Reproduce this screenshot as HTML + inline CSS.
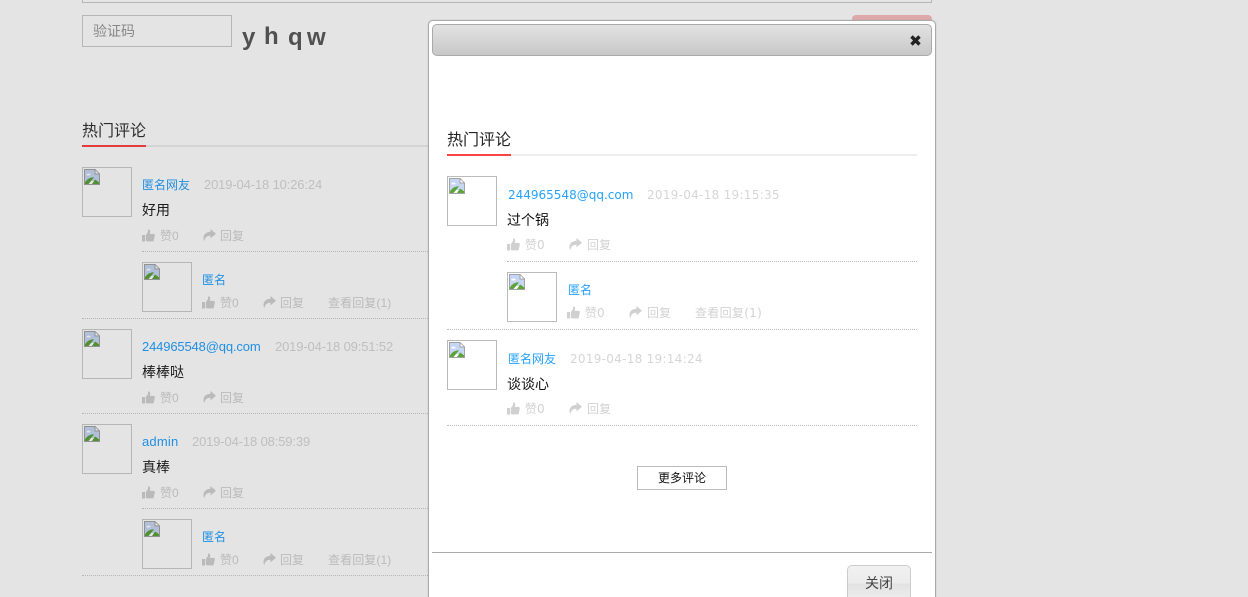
<!DOCTYPE html>
<html><head><meta charset="utf-8"><style>
html,body{margin:0;padding:0;background:#fff}
html{width:1248px;height:597px;overflow:hidden}
body{width:1248px;height:597px;overflow:hidden;position:relative;font-family:"Liberation Sans","Noto Sans CJK SC",sans-serif}
.a{position:absolute;white-space:nowrap}
.t{position:absolute;white-space:nowrap;line-height:20px;height:20px}
.av{position:absolute;width:48px;height:48px;border:1px solid #ccc;background:transparent}
.av svg{position:absolute;left:1px;top:1px}
.n{color:#25a2ff;font-size:12px}
.em{color:#25a2ff;font-size:13px}
.d{color:#d6d6d6;font-size:13px}
.c{color:#222;font-size:14px}
.g{color:#d2d2d2;font-size:12px}
.dl{position:absolute;height:0;border-top:1px dotted #ccc}
#ov ~ .av{border-color:#bbb}
#ov ~ .dl{border-color:#bbb}
.ic{position:absolute;fill:#d0d0d0}
.m{font-family:"DejaVu Sans","Noto Sans CJK SC",sans-serif}
#ov{position:absolute;left:0;top:0;width:1248px;height:597px;background:rgba(0,0,0,.105)}
#modal{position:absolute;left:428px;top:20px;width:506px;height:600px;border:1px solid #aaa;border-radius:5px;background:#fff;box-shadow:0 0 0 1px rgba(170,170,170,.15)}
</style></head><body>
<svg width="0" height="0" style="position:absolute"><defs>
<symbol id="th" viewBox="0 0 13 13"><path d="M0 6h3v6.500H0zM3.800 6.200 6 3V.6c1.300-.3 2.200.5 2.200 1.800 0 .9-.3 1.700-.6 2.500h3.900c1 0 1.500.8 1.300 1.600l-1 5c-.2.600-.6.900-1.200.9H5.500c-.7 0-1.200-.3-1.700-.6z"/></symbol>
<symbol id="sh" viewBox="0 0 13 13"><path d="M7.500 0 13 4.700 7.500 9.400V6.700C4.300 6.700 2 7.800 1.300 12.300-.8 7.800 1.200 3 7.500 2.700z"/></symbol>
<symbol id="br" viewBox="0 0 16 16"><path d="M.5.500h10.500l4.500 4.500v10.500H.5z" fill="#fff" stroke="#a3a3a3"/><path d="M1 1h9.500v4.500H15V12H1z" fill="#c6d6f5"/><path d="M2 6c2-2 3-2 5 0-2 .8-4 .6-5 0z" fill="#fff"/><path d="M1 15v-2c3-4 7-5 9-4.500L4.500 15z" fill="#5ba33a"/><path d="M11 10.500 15 13v2H8z" fill="#5ba33a"/><path d="M11 1v4h4" fill="#fff" stroke="#a3a3a3"/></symbol>
</defs></svg>

<!-- page behind -->
<div class="a" style="left:82px;top:-10px;width:848px;height:11px;border:1px solid #ccc"></div>
<div class="a" style="left:852px;top:15px;width:80px;height:30px;background:#f9bcbc;border-radius:4px"></div>
<div class="a" style="left:82px;top:15px;width:148px;height:30px;border:1px solid #ccc;line-height:30px;font-size:14px;color:#999;text-indent:10px">验证码</div>
<div class="a" style="left:242px;top:23px;font:bold 24px/30px 'Liberation Sans',sans-serif;color:#5a5a5a">y</div>
<div class="a" style="left:264px;top:22px;font:bold 24px/30px 'Liberation Sans',sans-serif;color:#5a5a5a">h</div>
<div class="a" style="left:288px;top:23px;font:bold 24px/30px 'Liberation Sans',sans-serif;color:#5a5a5a">q</div>
<div class="a" style="left:307px;top:23px;font:bold 24px/30px 'Liberation Sans',sans-serif;color:#5a5a5a">w</div>

<div class="t" style="left:82px;top:122px;font-size:16px;color:#333">热门评论</div>
<div class="a" style="left:82px;top:145px;width:850px;height:2px;background:#eee"></div>
<div class="a" style="left:82px;top:145px;width:64px;height:2px;background:#f44"></div>

<div class="av" style="left:82px;top:167px"><svg width="16" height="16"><use href="#br"/></svg></div>
<div class="t n" style="left:142px;top:175px">匿名网友</div>
<div class="t d" style="left:204px;top:175px;letter-spacing:-.14px">2019-04-18 10:26:24</div>
<div class="t c" style="left:142px;top:200px">好用</div>
<svg class="ic" style="left:142px;top:229px" width="13" height="13"><use href="#th"/></svg><div class="t g" style="left:160px;top:226px">赞0</div>
<svg class="ic" style="left:203px;top:229px" width="13" height="13"><use href="#sh"/></svg><div class="t g" style="left:220px;top:226px">回复</div>
<div class="dl" style="left:142px;top:251px;width:790px"></div>

<div class="av" style="left:142px;top:262px"><svg width="16" height="16"><use href="#br"/></svg></div>
<div class="t n" style="left:202px;top:270px">匿名</div>
<svg class="ic" style="left:202px;top:296px" width="13" height="13"><use href="#th"/></svg><div class="t g" style="left:220px;top:293px">赞0</div>
<svg class="ic" style="left:263px;top:296px" width="13" height="13"><use href="#sh"/></svg><div class="t g" style="left:280px;top:293px">回复</div>
<div class="t g" style="left:328px;top:293px;letter-spacing:.1px">查看回复(1)</div>
<div class="dl" style="left:82px;top:318px;width:850px"></div>

<div class="av" style="left:82px;top:329px"><svg width="16" height="16"><use href="#br"/></svg></div>
<div class="t em" style="left:142px;top:337px;letter-spacing:-.15px">244965548@qq.com</div>
<div class="t d" style="left:275px;top:337px;letter-spacing:-.14px">2019-04-18 09:51:52</div>
<div class="t c" style="left:142px;top:362px">棒棒哒</div>
<svg class="ic" style="left:142px;top:391px" width="13" height="13"><use href="#th"/></svg><div class="t g" style="left:160px;top:388px">赞0</div>
<svg class="ic" style="left:203px;top:391px" width="13" height="13"><use href="#sh"/></svg><div class="t g" style="left:220px;top:388px">回复</div>
<div class="dl" style="left:82px;top:413px;width:850px"></div>

<div class="av" style="left:82px;top:424px"><svg width="16" height="16"><use href="#br"/></svg></div>
<div class="t em" style="left:142px;top:432px;letter-spacing:.2px">admin</div>
<div class="t d" style="left:192px;top:432px;letter-spacing:-.14px">2019-04-18 08:59:39</div>
<div class="t c" style="left:142px;top:457px">真棒</div>
<svg class="ic" style="left:142px;top:486px" width="13" height="13"><use href="#th"/></svg><div class="t g" style="left:160px;top:483px">赞0</div>
<svg class="ic" style="left:203px;top:486px" width="13" height="13"><use href="#sh"/></svg><div class="t g" style="left:220px;top:483px">回复</div>
<div class="dl" style="left:142px;top:508px;width:790px"></div>

<div class="av" style="left:142px;top:519px"><svg width="16" height="16"><use href="#br"/></svg></div>
<div class="t n" style="left:202px;top:527px">匿名</div>
<svg class="ic" style="left:202px;top:553px" width="13" height="13"><use href="#th"/></svg><div class="t g" style="left:220px;top:550px">赞0</div>
<svg class="ic" style="left:263px;top:553px" width="13" height="13"><use href="#sh"/></svg><div class="t g" style="left:280px;top:550px">回复</div>
<div class="t g" style="left:328px;top:550px;letter-spacing:.1px">查看回复(1)</div>
<div class="dl" style="left:82px;top:575px;width:850px"></div>

<div id="ov"></div>

<!-- modal -->
<div id="modal"></div>
<div class="a" style="left:432px;top:24px;width:498px;height:30px;border:1px solid #aaa;border-radius:5px;background:linear-gradient(#e2e2e2,#c8c8c8)"></div>
<svg class="a" style="left:910px;top:35px" width="11" height="11" viewBox="0 0 11 11"><path d="M1.500 1.500 9.500 9.500M9.500 1.500 1.500 9.500" stroke="#222" stroke-width="3.400" fill="none"/></svg>

<div class="t" style="left:447px;top:131px;font-size:16px;color:#222">热门评论</div>
<div class="a" style="left:447px;top:154px;width:470px;height:2px;background:#eee"></div>
<div class="a" style="left:447px;top:154px;width:64px;height:2px;background:#f44"></div>

<div class="av" style="left:447px;top:176px"><svg width="16" height="16"><use href="#br"/></svg></div>
<div class="t n m" style="left:508px;top:185px">244965548@qq.com</div>
<div class="t d m" style="left:647px;top:185px;font-size:12px;letter-spacing:.28px">2019-04-18 19:15:35</div>
<div class="t c" style="left:507px;top:210px;color:#111">过个锅</div>
<svg class="ic" style="left:507px;top:238px" width="13" height="13"><use href="#th"/></svg><div class="t g m" style="left:525px;top:235px">赞0</div>
<svg class="ic" style="left:569px;top:238px" width="13" height="13"><use href="#sh"/></svg><div class="t g" style="left:587px;top:235px">回复</div>
<div class="dl" style="left:507px;top:261px;width:410px"></div>

<div class="av" style="left:507px;top:272px"><svg width="16" height="16"><use href="#br"/></svg></div>
<div class="t n" style="left:568px;top:280px">匿名</div>
<svg class="ic" style="left:567px;top:306px" width="13" height="13"><use href="#th"/></svg><div class="t g m" style="left:585px;top:303px">赞0</div>
<svg class="ic" style="left:629px;top:306px" width="13" height="13"><use href="#sh"/></svg><div class="t g" style="left:647px;top:303px">回复</div>
<div class="t g m" style="left:695px;top:303px;letter-spacing:.3px">查看回复(1)</div>
<div class="dl" style="left:447px;top:329px;width:470px"></div>

<div class="av" style="left:447px;top:340px"><svg width="16" height="16"><use href="#br"/></svg></div>
<div class="t n" style="left:508px;top:349px">匿名网友</div>
<div class="t d m" style="left:570px;top:349px;font-size:12px;letter-spacing:.28px">2019-04-18 19:14:24</div>
<div class="t c" style="left:507px;top:374px;color:#111">谈谈心</div>
<svg class="ic" style="left:507px;top:402px" width="13" height="13"><use href="#th"/></svg><div class="t g m" style="left:525px;top:399px">赞0</div>
<svg class="ic" style="left:569px;top:402px" width="13" height="13"><use href="#sh"/></svg><div class="t g" style="left:587px;top:399px">回复</div>
<div class="dl" style="left:447px;top:425px;width:470px"></div>

<div class="a" style="left:637px;top:466px;width:88px;height:22px;border:1px solid #bbb;font-size:12px;line-height:22px;text-align:center;color:#111">更多评论</div>

<div class="a" style="left:432px;top:552px;width:500px;height:1px;background:#aaa"></div>
<div class="a" style="left:847px;top:565px;width:62px;height:40px;border:1px solid #ccc;border-radius:5px;background:linear-gradient(#f1f1f1 0,#ececec 17px,#e2e2e2 18px,#ececec 32px);font-size:14px;line-height:35px;text-align:center;color:#444">关闭</div>
</body></html>
